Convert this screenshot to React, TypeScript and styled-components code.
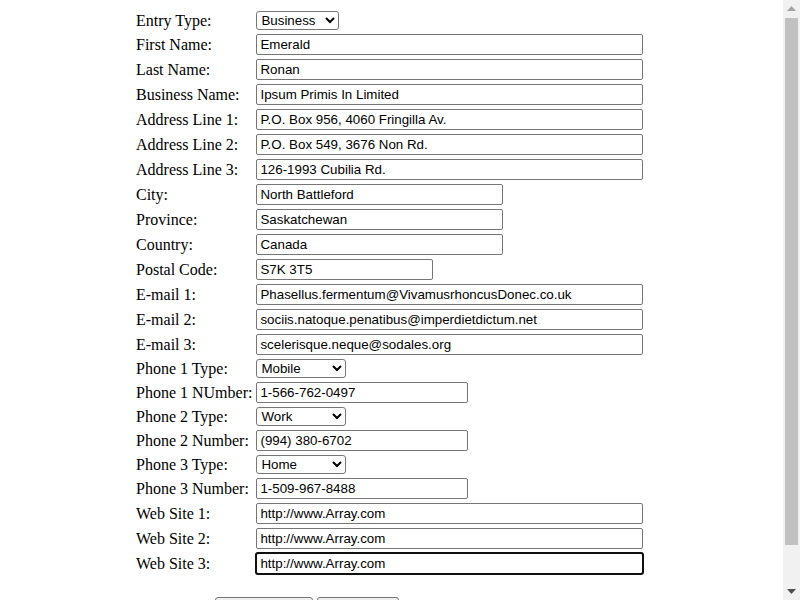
import { createGlobalStyle } from "styled-components";
import styled from "styled-components";

const GlobalStyle = createGlobalStyle`
  html, body {
    background: #ffffff;
  }
  body {
    margin: 0;
    font-family: "Liberation Serif", "Times New Roman", serif;
    font-size: 16px;
    color: #000000;
  }
`;

type Field =
  | { kind: "text"; label: string; value: string; width: number; focused?: boolean }
  | { kind: "select"; label: string; value: string; width: number; options: string[] };

const LONG = 387;
const MID = 247;
const POSTAL = 177;
const PHONE = 212;
const phoneTypes = ["Mobile", "Work", "Home", "Fax", "Other"];

const fields: Field[] = [
  { kind: "select", label: "Entry Type:", value: "Business", width: 83, options: ["Business", "Personal"] },
  { kind: "text", label: "First Name:", value: "Emerald", width: LONG },
  { kind: "text", label: "Last Name:", value: "Ronan", width: LONG },
  { kind: "text", label: "Business Name:", value: "Ipsum Primis In Limited", width: LONG },
  { kind: "text", label: "Address Line 1:", value: "P.O. Box 956, 4060 Fringilla Av.", width: LONG },
  { kind: "text", label: "Address Line 2:", value: "P.O. Box 549, 3676 Non Rd.", width: LONG },
  { kind: "text", label: "Address Line 3:", value: "126-1993 Cubilia Rd.", width: LONG },
  { kind: "text", label: "City:", value: "North Battleford", width: MID },
  { kind: "text", label: "Province:", value: "Saskatchewan", width: MID },
  { kind: "text", label: "Country:", value: "Canada", width: MID },
  { kind: "text", label: "Postal Code:", value: "S7K 3T5", width: POSTAL },
  { kind: "text", label: "E-mail 1:", value: "Phasellus.fermentum@VivamusrhoncusDonec.co.uk", width: LONG },
  { kind: "text", label: "E-mail 2:", value: "sociis.natoque.penatibus@imperdietdictum.net", width: LONG },
  { kind: "text", label: "E-mail 3:", value: "scelerisque.neque@sodales.org", width: LONG },
  { kind: "select", label: "Phone 1 Type:", value: "Mobile", width: 90, options: phoneTypes },
  { kind: "text", label: "Phone 1 NUmber:", value: "1-566-762-0497", width: PHONE },
  { kind: "select", label: "Phone 2 Type:", value: "Work", width: 90, options: phoneTypes },
  { kind: "text", label: "Phone 2 Number:", value: "(994) 380-6702", width: PHONE },
  { kind: "select", label: "Phone 3 Type:", value: "Home", width: 90, options: phoneTypes },
  { kind: "text", label: "Phone 3 Number:", value: "1-509-967-8488", width: PHONE },
  { kind: "text", label: "Web Site 1:", value: "http://www.Array.com", width: LONG },
  { kind: "text", label: "Web Site 2:", value: "http://www.Array.com", width: LONG },
  { kind: "text", label: "Web Site 3:", value: "http://www.Array.com", width: LONG, focused: true },
];

export default function App() {
  return (
    <>
      <GlobalStyle />
      <Window>
        <Content>
          <FormTable>
            <tbody>
              {fields.map((f) => (
                <tr key={f.label}>
                  <LabelCell>{f.label}</LabelCell>
                  <FieldCell>
                    {f.kind === "text" ? (
                      <TextInput
                        type="text"
                        defaultValue={f.value}
                        $width={f.width}
                        $focused={!!f.focused}
                      />
                    ) : (
                      <Select defaultValue={f.value} $width={f.width}>
                        {f.options.map((o) => (
                          <option key={o}>{o}</option>
                        ))}
                      </Select>
                    )}
                  </FieldCell>
                </tr>
              ))}
            </tbody>
          </FormTable>

          <ButtonBar>
            <Button $width={98}>Save Record</Button>
            <Button $width={82}>Cancel</Button>
          </ButtonBar>
        </Content>

        <Scrollbar>
          <ArrowButton>
            <svg width="9" height="5" viewBox="0 0 9 5">
              <polygon points="0,5 9,5 4.5,0" fill="#a3a3a3" />
            </svg>
          </ArrowButton>
          <Track>
            <Thumb />
          </Track>
          <ArrowButton>
            <svg width="9" height="5" viewBox="0 0 9 5">
              <polygon points="0,0 9,0 4.5,5" fill="#505050" />
            </svg>
          </ArrowButton>
        </Scrollbar>
      </Window>
    </>
  );
}

const Window = styled.div`
  display: flex;
  height: 600px;
  overflow: hidden;
`;

const Content = styled.div`
  flex: 1;
  min-width: 0;
  padding: 8px;
  overflow: hidden;
`;

const FormTable = styled.table`
  border-spacing: 2px;
  margin-left: 125px;
`;

const LabelCell = styled.td`
  padding: 1px;
  white-space: nowrap;
  vertical-align: middle;
`;

const FieldCell = styled.td`
  padding: 1px;
  vertical-align: middle;
`;

const TextInput = styled.input<{ $width: number; $focused: boolean }>`
  display: block;
  box-sizing: border-box;
  width: ${(p) => p.$width}px;
  height: 21px;
  margin: 0;
  padding: 1px 3px;
  font-family: "Liberation Sans", Arial, sans-serif;
  font-size: 13.33px;
  color: #000000;
  background: #ffffff;
  border: 1px solid #767676;
  border-radius: 2px;
  outline: ${(p) => (p.$focused ? "2px solid #101010" : "none")};
  outline-offset: -1px;
`;

const Select = styled.select<{ $width: number }>`
  display: block;
  box-sizing: border-box;
  width: ${(p) => p.$width}px;
  height: 19px;
  margin: 0;
  font-family: "Liberation Sans", Arial, sans-serif;
  font-size: 13.33px;
  color: #000000;
  background: #ffffff;
  border: 1px solid #767676;
  border-radius: 3px;
`;

const ButtonBar = styled.div`
  display: flex;
  gap: 4px;
  margin: 20px 0 18px 207px;
`;

const Button = styled.button<{ $width: number }>`
  box-sizing: border-box;
  width: ${(p) => p.$width}px;
  height: 21px;
  font-family: "Liberation Sans", Arial, sans-serif;
  font-size: 13.33px;
  color: #000000;
  background: #efefef;
  border: 1px solid #767676;
  border-radius: 3px;
`;

const Scrollbar = styled.div`
  flex: 0 0 17px;
  display: flex;
  flex-direction: column;
  background: #f1f1f1;
`;

const ArrowButton = styled.div`
  flex: 0 0 17px;
  display: flex;
  align-items: center;
  justify-content: center;
`;

const Track = styled.div`
  flex: 1;
  padding: 1px 2px;
`;

const Thumb = styled.div`
  height: 527px;
  background: #c1c1c1;
`;
